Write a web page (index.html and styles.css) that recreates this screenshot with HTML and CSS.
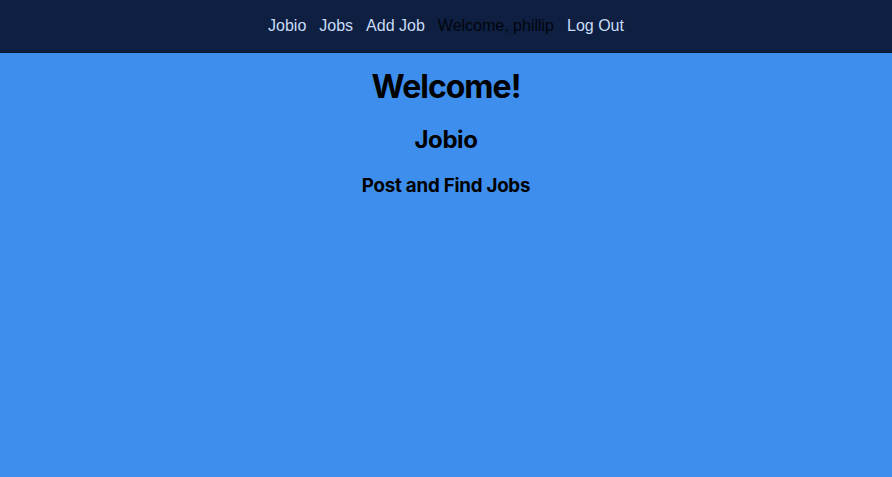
FILE: index.html
```html
<!DOCTYPE html>
<html>
<head>
<meta charset="utf-8">
<link rel="stylesheet" href="styles.css">
</head>
<body>
<nav class="nav">
  <a class="nav-link" href="#">Jobio</a>
  <a class="nav-link" href="#">Jobs</a>
  <a class="nav-link" href="#">Add Job</a>
  <span class="nav-user">Welcome, phillip</span>
  <a class="nav-link" href="#">Log Out</a>
</nav>
<main class="main">
  <h1 class="title">Welcome!</h1>
  <h2 class="subtitle">Jobio</h2>
  <h3 class="tagline">Post and Find Jobs</h3>
</main>
</body>
</html>
```
FILE: styles.css
```css
html, body {
  margin: 0;
  padding: 0;
  height: 100%;
}
body {
  background: #3d8eed;
  font-family: Inter, "Liberation Sans", sans-serif;
  color: #000;
}
.nav {
  background: #0e1f42;
  height: 52px;
  border-bottom: 1px solid #0a1630;
  display: flex;
  justify-content: center;
  align-items: center;
  gap: 13px;
  font-family: "Liberation Sans", Arial, sans-serif;
  font-size: 16px;
}
.nav-link {
  color: #c9dcf5;
  text-decoration: none;
}
.nav-user {
  color: #02050d;
}
.main {
  text-align: center;
}
.title {
  font-size: 32px;
  font-weight: 700;
  letter-spacing: -1px;
  margin: 14px 0 0;
}
.subtitle {
  font-size: 24px;
  font-weight: 700;
  letter-spacing: -0.4px;
  margin: 19px 0 0;
}
.tagline {
  font-size: 18.7px;
  font-weight: 700;
  letter-spacing: -0.22px;
  margin: 20px 0 0;
}
```
